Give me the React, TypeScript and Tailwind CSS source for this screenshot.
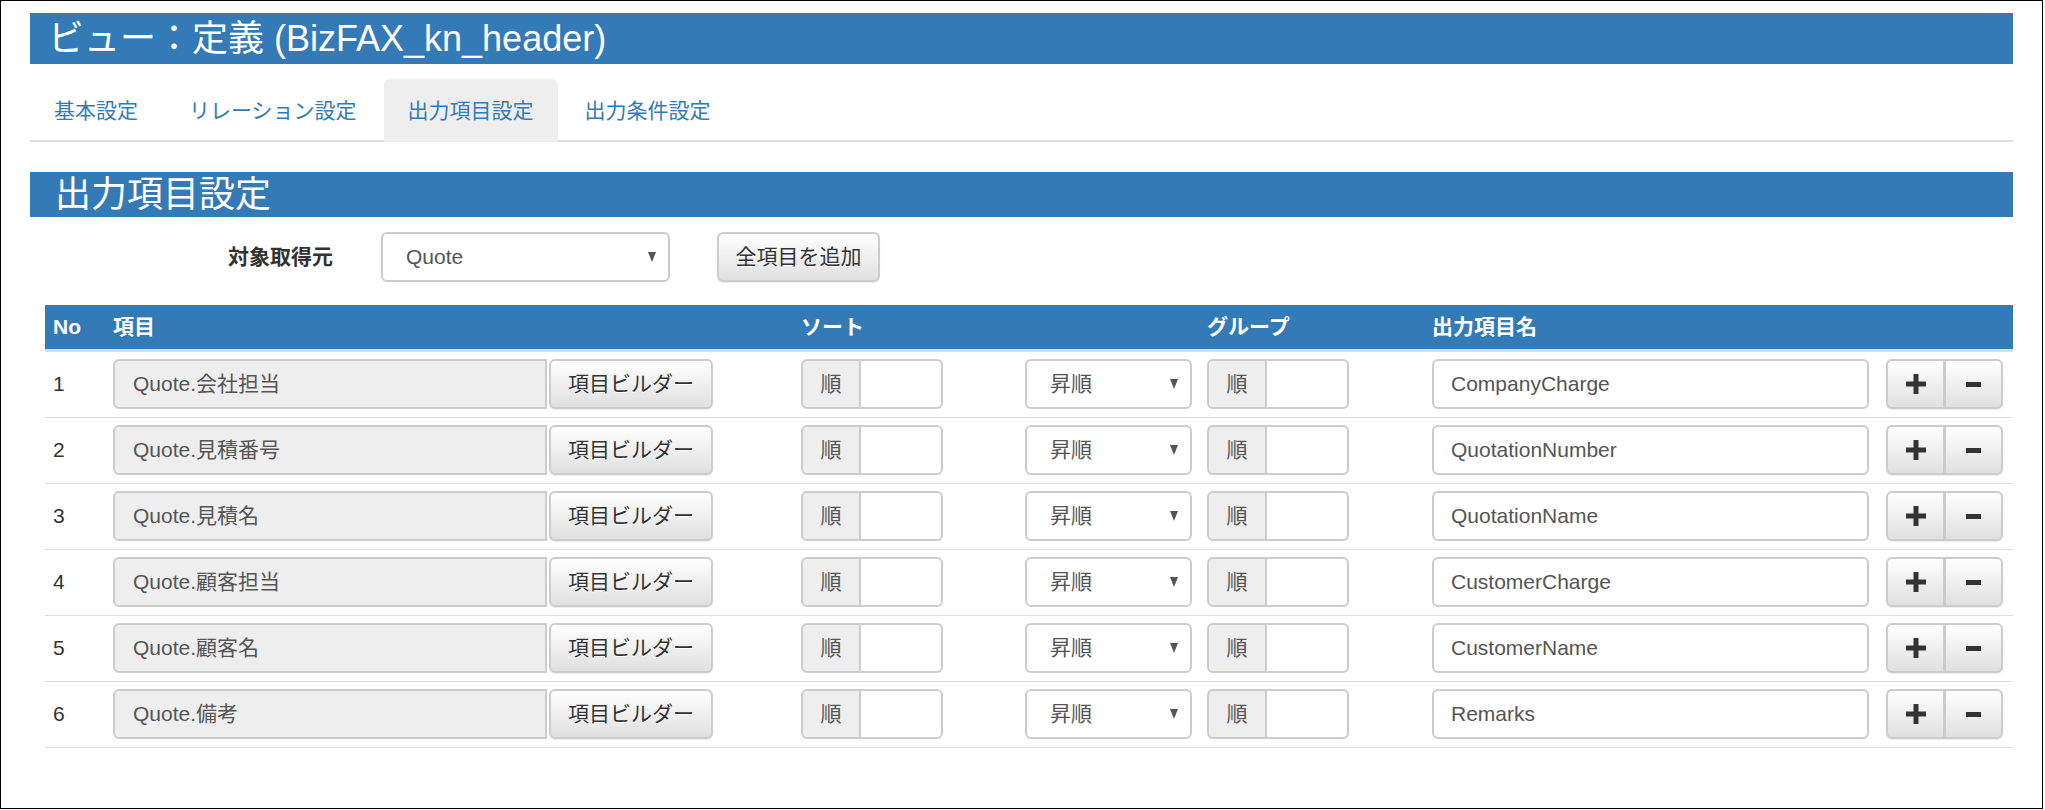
type FieldRow = { no: number; item: string; name: string };

const rows: FieldRow[] = [
  { no: 1, item: "Quote.会社担当", name: "CompanyCharge" },
  { no: 2, item: "Quote.見積番号", name: "QuotationNumber" },
  { no: 3, item: "Quote.見積名", name: "QuotationName" },
  { no: 4, item: "Quote.顧客担当", name: "CustomerCharge" },
  { no: 5, item: "Quote.顧客名", name: "CustomerName" },
  { no: 6, item: "Quote.備考", name: "Remarks" },
];

const tabs = ["基本設定", "リレーション設定", "出力項目設定", "出力条件設定"];
const activeTab = "出力項目設定";

// bootstrap-theme style default button
const btn =
  "bg-linear-to-b from-white to-[#e0e0e0] border-2 border-[#cccccc] text-[#333] [text-shadow:0_1px_0_#fff] shadow-[0_1px_1px_rgba(0,0,0,0.08)]";

const cols = "grid grid-cols-[60px_688px_224px_182px_225px_454px_135px]";

function Caret() {
  return (
    <svg width="8" height="10" viewBox="0 0 8 10">
      <path d="M0 0h8L4 10z" fill="#555" />
    </svg>
  );
}

function SelectBox({ value, width }: { value: string; width: string }) {
  return (
    <div className={`flex items-center justify-between h-[50px] ${width} bg-white border-2 border-[#cccccc] rounded-[6px] pl-[23px] pr-[12px] text-[#555]`}>
      <span>{value}</span>
      <Caret />
    </div>
  );
}

function OrderInput() {
  return (
    <div className="flex h-[50px] w-[142px]">
      <span className="flex items-center justify-center w-[60px] bg-[#eeeeee] border-2 border-[#cccccc] rounded-l-[6px] text-[#555]">順</span>
      <span className="flex-1 bg-white border-2 border-l-0 border-[#cccccc] rounded-r-[6px]" />
    </div>
  );
}

export default function App() {
  return (
    <div className="w-[2043px] h-[809px] border border-black bg-white text-[21px] leading-[30px] text-[#333] font-['Liberation_Sans','Noto_Sans_CJK_JP',sans-serif]">
      <div className="px-[29px] pt-[12px]">
        <h1 className="flex items-center h-[51px] bg-[#337ab7] pl-[18px] text-white text-[36px] leading-none">
          ビュー：定義 (BizFAX_kn_header)
        </h1>

        <ul className="flex mt-[15px] border-b-2 border-[#dddddd]">
          {tabs.map((t) => (
            <li
              key={t}
              className={`flex items-center h-[63px] -mb-[2px] mr-[3px] px-[24px] rounded-t-[6px] text-[#337ab7] ${t === activeTab ? "bg-[#eeeeee]" : ""}`}
            >
              {t}
            </li>
          ))}
        </ul>

        <h2 className="flex items-center h-[45px] mt-[30px] bg-[#337ab7] pl-[25px] text-white text-[36px] leading-none">出力項目設定</h2>

        <div className="flex items-center h-[50px] mt-[15px]">
          <label className="w-[303px] text-right font-bold">対象取得元</label>
          <div className="ml-[48px]">
            <SelectBox value="Quote" width="w-[289px]" />
          </div>
          <button className={`${btn} ml-[47px] w-[163px] h-[50px] rounded-[6px]`}>全項目を追加</button>
        </div>

        <div className="mt-[23px] ml-[15px]">
          <div className={`${cols} h-[47px] bg-[#337ab7] border-b-[3px] border-[#dddddd] text-white font-bold`}>
            <div className="flex items-center px-[8px]">No</div>
            <div className="flex items-center px-[8px]">項目</div>
            <div className="col-span-2 flex items-center px-[8px]">ソート</div>
            <div className="flex items-center px-[8px]">グループ</div>
            <div className="flex items-center px-[8px]">出力項目名</div>
            <div />
          </div>

          {rows.map((r) => (
            <div key={r.no} className={`${cols} border-b border-[#dddddd]`}>
              <div className="flex items-center px-[8px] pt-[7px] pb-[8px]">{r.no}</div>
              <div className="flex px-[8px] pt-[7px] pb-[8px]">
                <div className="flex items-center h-[50px] w-[434px] bg-[#eeeeee] border-2 border-[#cccccc] rounded-l-[6px] pl-[18px] text-[#555]">
                  {r.item}
                </div>
                <button className={`${btn} ml-[2px] w-[164px] h-[50px] rounded-[6px]`}>項目ビルダー</button>
              </div>
              <div className="px-[8px] pt-[7px] pb-[8px]">
                <OrderInput />
              </div>
              <div className="px-[8px] pt-[7px] pb-[8px]">
                <SelectBox value="昇順" width="w-[167px]" />
              </div>
              <div className="px-[8px] pt-[7px] pb-[8px]">
                <OrderInput />
              </div>
              <div className="px-[8px] pt-[7px] pb-[8px]">
                <div className="flex items-center h-[50px] w-[437px] bg-white border-2 border-[#cccccc] rounded-[6px] pl-[17px] text-[#555]">
                  {r.name}
                </div>
              </div>
              <div className="px-[8px] pt-[7px] pb-[8px]">
                <div className="flex h-[50px] w-[117px]">
                  <button className={`${btn} flex items-center justify-center w-[59px] rounded-l-[6px]`}>
                    <svg width="20" height="20" viewBox="0 0 20 20">
                      <path d="M7.5 0h5v7.5H20v5h-7.5V20h-5v-7.5H0v-5h7.5z" fill="#333" />
                    </svg>
                  </button>
                  <button className={`${btn} flex items-center justify-center w-[58px] border-l rounded-r-[6px]`}>
                    <svg width="15" height="5" viewBox="0 0 15 5">
                      <rect width="15" height="5" fill="#333" />
                    </svg>
                  </button>
                </div>
              </div>
            </div>
          ))}
        </div>
      </div>
    </div>
  );
}
